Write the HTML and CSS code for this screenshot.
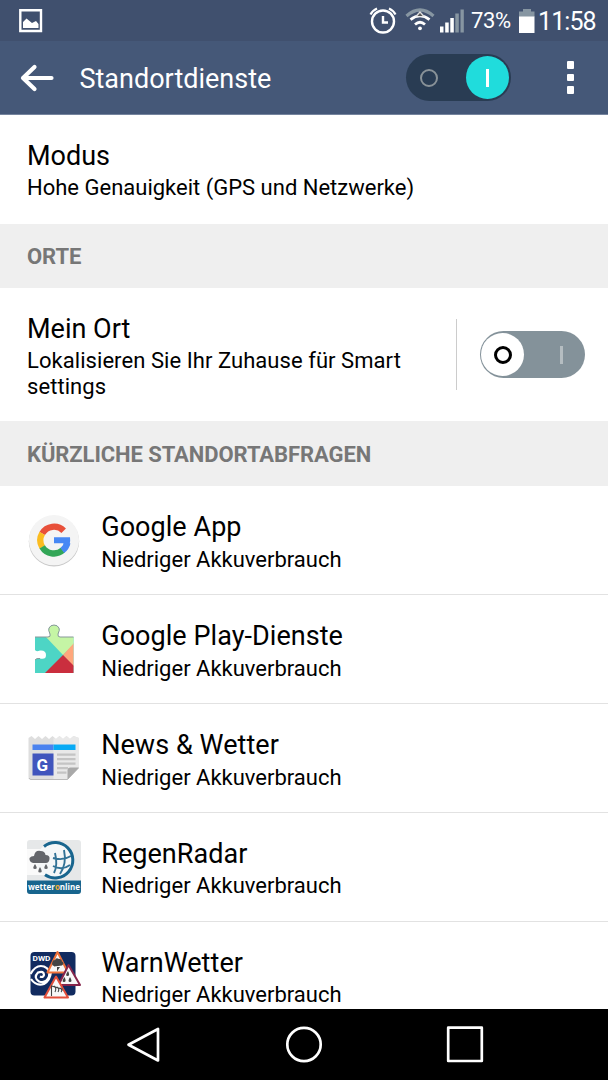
FILE: index.html
```html
<!DOCTYPE html>
<html lang="de">
<head>
<meta charset="utf-8">
<title>Standortdienste</title>
<link rel="stylesheet" href="styles.css">
</head>
<body>
<div class="screen">
  <div class="status">
    <svg class="picture" width="24" height="24" viewBox="0 0 24 24"><path d="M1.300 1.300H22V22H1.300Z" fill="none" stroke="#fff" stroke-width="2.400"/><path d="M4 19V13L7.500 9.500 13 14 17 12 19.500 15V19Z" fill="#fff"/></svg>
    <svg class="indicators" width="106" height="28" viewBox="0 0 106 28">
      <g fill="none" stroke="#fff" stroke-width="2.400"><circle cx="14" cy="15.500" r="11"/><path d="M14 10V16.500H19"/><path d="M1.500 8.500Q3.500 4.500 8 2.500M20 2.500Q24.500 4.500 26.500 8.500" stroke-width="2.200"/></g>
      <g fill="none" stroke="#fff" stroke-width="2.800"><path d="M37.500 10Q51 -2 64.500 10" stroke="#8796a2" stroke-width="3.200"/><path d="M41.500 13.700Q51 6 60.500 13.700"/><path d="M46 18.500Q51 14 56 18.500"/></g>
      <path d="M46 10.500L51 5 56 10.500Z" fill="#ddd"/><path d="M48.500 10L51 7 53.500 10Z" fill="#555"/><circle cx="51" cy="22.300" r="1.900" fill="#fff"/>
      <path d="M71 20.500H74.500V26.500H71ZM76.200 16.500H79.700V26.500H76.200ZM81.300 12H84.800V26.500H81.300Z" fill="#fff"/><path d="M86.300 7.500H89.800V26.500H86.300ZM91.500 3.500H94.800V26.500H91.500Z" fill="#8796a2"/>
    </svg>
    <span class="percent">73%</span>
    <svg class="battery" width="16" height="24" viewBox="0 0 16 24"><path d="M4 0H12V2.500H15.500V8H0V2.500H4Z" fill="#8796a2"/><path d="M0 7.500H15.500V24H0Z" fill="#fff"/></svg>
    <span class="clock">11:58</span>
  </div>
  <header class="bar">
    <svg class="back" width="34" height="28" viewBox="0 0 34 28" fill="none" stroke="#fff" stroke-width="4.200" stroke-linecap="round" stroke-linejoin="round"><path d="M14.500 3L3 14 14.500 25M3 14H31.500"/></svg>
    <h1 class="heading">Standortdienste</h1>
    <div class="switch on"><span class="off-mark"></span><span class="knob"><i class="line"></i></span></div>
    <div class="more"><i></i><i></i><i></i></div>
  </header>
  <main class="content">
    <section class="row"><div class="text"><div class="title">Modus</div><div class="sub">Hohe Genauigkeit (GPS und Netzwerke)</div></div></section>
    <h2 class="section">ORTE</h2>
    <section class="row place">
      <div class="text"><div class="title">Mein Ort</div><div class="sub wide">Lokalisieren Sie Ihr Zuhause für Smart settings</div></div>
      <div class="divider"></div>
      <div class="switch off"><span class="knob"><i class="ring"></i></span><i class="line"></i></div>
    </section>
    <h2 class="section recent">KÜRZLICHE STANDORTABFRAGEN</h2>
    <section class="row app">
      <svg class="icon" width="56" height="56" viewBox="0 0 56 56"><circle cx="28" cy="28.300" r="25.200" fill="#c8c8c8"/><circle cx="28" cy="27.200" r="25.100" fill="#f4f4f4"/>
        <g fill="none" stroke-width="6.300"><path d="M37.700 17.800A13.600 13.600 0 0 0 16.200 20.500" stroke="#e8503a"/><path d="M16.200 20.300A13.600 13.600 0 0 0 16.200 34.100" stroke="#fbbc20"/><path d="M16.200 33.800A13.600 13.600 0 0 0 36.800 37.200" stroke="#33a657"/><path d="M36.300 37.500A13.600 13.600 0 0 0 41.400 29.700" stroke="#4788f4"/></g><path d="M28 24.300H44Q44.700 28.500 43.400 32.500H37.500V30.300H28Z" fill="#4788f4"/></svg>
      <div class="text"><div class="title">Google App</div><div class="sub">Niedriger Akkuverbrauch</div></div>
    </section>
    <section class="row app">
      <svg class="icon" width="56" height="56" viewBox="0 0 56 56">
        <defs><clipPath id="puzzle"><path d="M9 15H22Q25 15 24 12Q22 8 23 6Q24.500 3 28 3T33 6Q34 8 32 12Q31.500 15 34 15H47.500V51H9V38Q10 36 14 36.500Q20 38 20 33T14 28.500Q10 30 9 28Z"/></clipPath></defs>
        <g clip-path="url(#puzzle)"><path d="M9 3H48V53H9Z" fill="#4dd5c5"/><path d="M19 14V0H48V22L37 33Z" fill="#c5f5a5"/><path d="M48 21V45L37 33Z" fill="#ffa77c"/><path d="M18 52L37 33 48 44V53Z" fill="#ca2e3e"/></g>
        <path d="M9 15H22Q25 15 24 12Q22 8 23 6Q24.500 3 28 3T33 6Q34 8 32 12Q31.500 15 34 15H47.500M9 38Q10 36 14 36.500" fill="none" stroke="#89999a"/></svg>
      <div class="text"><div class="title">Google Play-Dienste</div><div class="sub">Niedriger Akkuverbrauch</div></div>
    </section>
    <section class="row app">
      <svg class="icon" width="56" height="56" viewBox="0 0 56 56"><path d="M2.500 7L5.500 5 9 8 12.500 5 16 8 19.500 5 23 8 26.500 5 30 8 33.500 5 37 8 40.500 5 44 8 47.500 5 53 7V36L41.500 48.500H5Q2.500 48.500 2.500 46Z" fill="#dedede"/><path d="M27.500 7L30 8 33.500 5 37 8 40.500 5 44 8 47.500 5 53 7V36L41.500 48.500H27.500Z" fill="#e9e9e9"/><path d="M3 47Q3.500 48.500 5 48.500H41.500L52.500 37" fill="none" stroke="#bbb"/><path d="M41.500 48.500V39.500Q41.500 36.500 44.500 36.500H53Z" fill="#a9a9a9"/><path d="M6.500 13.500H27.500V19H6.500Z" fill="#4b83ef"/><path d="M27.500 13.500H49.500V19H27.500Z" fill="#08aaf5"/><path d="M6.500 22.500H27.500V44.500H6.500Z" fill="#4055bd"/><path d="M31 22.500H49.500V24.800H31ZM31 27H49.500V29.300H31ZM31 31.500H49.500V33.800H31ZM31 36H42V38.300H31ZM31 40.500H40.500V42.800H31Z" fill="#c4c4c4"/><text class="news-g" x="10.500" y="39.800">G</text></svg>
      <div class="text"><div class="title">News &amp; Wetter</div><div class="sub">Niedriger Akkuverbrauch</div></div>
    </section>
    <section class="row app">
      <svg class="icon" width="56" height="56" viewBox="0 0 56 56"><rect x="1" y="0" width="54" height="54" rx="3" fill="#e6e8e9"/><path d="M1 9H29V35H1Z" fill="#fafafa"/><circle cx="28" cy="20" r="17.500" fill="#f5f7f8"/><path d="M18 6.500A17.700 17.700 0 1 1 19 34.800" fill="none" stroke="#18658e" stroke-width="3"/><g fill="none" stroke="#327296" stroke-width="1.900"><path d="M27 18Q37 21 45 16M27 26Q36 31 44 25M29 13Q32 25 28 33M38 10Q41 24 34 34"/></g><path d="M7 23Q3 22 3.500 18Q5 16 8 16Q9 10 14.500 11Q19 11 19.500 15Q24 15 23.500 19T20 23Z" fill="#64666b"/><path d="M9 24Q5.500 29 9 29T9 24M14 27Q10.500 32.500 14 32.500T14 27M20 24Q16.500 29 20 29T20 24" fill="#65676b"/><path d="M1 40.500H55V51Q55 54 52 54H4Q1 54 1 51Z" fill="#18658e"/><text class="online" x="2" y="50" textLength="52" lengthAdjust="spacingAndGlyphs">wetter<tspan fill="#f6ac32">o</tspan>nline</text></svg>
      <div class="text"><div class="title">RegenRadar</div><div class="sub">Niedriger Akkuverbrauch</div></div>
    </section>
    <section class="row app">
      <svg class="icon" width="56" height="56" viewBox="0 0 56 56"><rect x="4.500" y="3" width="45" height="43.500" rx="4" fill="#112b60"/><path d="M4.500 25Q10 15 18 17.500Q25 20.500 23 27.500Q20 35 13 32.500Q7 28.500 12 23.500Q18 21.500 18 26Q17 29 14 27.500M5 30Q10 37.500 18 35Q24 32 25 23" fill="none" stroke="#fff" stroke-width="2.200"/><text class="dwd" x="6.500" y="11.500" textLength="18" lengthAdjust="spacingAndGlyphs">DWD</text>
        <g fill="#f8f8f8" stroke-width="2" stroke-linejoin="round"><path d="M31.500 3L21.500 23.500H42Z" stroke="#ef7138"/><path d="M42.500 16L32.500 36H54Z" stroke="#86254b"/><path d="M30 27.500L18.500 48.500H42Z" stroke="#e24f3b"/></g><path d="M28 17Q25 16 26.500 13Q26.500 11 29 11Q30 8 33 10Q36 9.500 36 12.500Q39 14 36 16.500L28 17.500ZM31 18H34L31 22.500ZM42 22Q38.500 27 41.500 27T42 22M38.500 28Q35 33 38 33T38.500 28M44 28Q41 33 44 33T44 28" fill="#444"/><path d="M25.500 47V37L36 40V42M28 37Q31 39 29 43M31 38Q34 40 32 43M34 39Q37 41 35 43" fill="none" stroke="#444" stroke-width="1.100"/></svg>
      <div class="text"><div class="title">WarnWetter</div><div class="sub">Niedriger Akkuverbrauch</div></div>
    </section>
  </main>
  <nav class="nav">
    <svg width="38" height="38" viewBox="0 0 38 38"><path d="M34 3V34.500L4.500 18.700Z"/></svg>
    <svg width="38" height="38" viewBox="0 0 38 38"><circle cx="19" cy="18.500" r="16.700"/></svg>
    <svg width="38" height="38" viewBox="0 0 38 38"><path d="M2.200 1.700H35.800V35H2.200Z"/></svg>
  </nav>
</div>
</body>
</html>
```
FILE: styles.css
```css
* { box-sizing: border-box; }
body { margin: 0; background: #fff; font-family: Roboto, sans-serif; color: #000; }
svg { display: block; flex-shrink: 0; }
.screen { width: 608px; height: 1080px; display: flex; flex-direction: column; overflow: hidden; }
.status { height: 41px; flex-shrink: 0; background: #40506e; color: #fff; display: flex; align-items: center; padding-left: 19px; }
.picture { margin-right: 326px; }
.indicators { margin-top: -2px; }
.percent { font-size: 22px; width: 44px; margin-left: -4px; letter-spacing: -.4px; white-space: nowrap; line-height: 43px; }
.battery { margin-left: 4px; }
.clock { font-size: 25px; margin-left: 3px; letter-spacing: -.9px; line-height: 44px; padding-top: 2px; }
.bar { height: 74px; flex-shrink: 0; background: #455878; border-bottom: 1px solid #75849e; color: #fff; display: flex; align-items: center; padding-left: 20px; }
.back { margin-right: 25.5px; }
.heading { margin: 3px 0 0; width: 326px; font-size: 27px; font-weight: 400; line-height: 32px; }
.switch { width: 105px; height: 47px; border-radius: 24px; display: flex; align-items: center; flex-shrink: 0; }
.on { background: #293c53; padding: 0 2px 0 14px; justify-content: space-between; }
.off-mark { width: 18px; height: 18px; border: 2.5px solid #899298; border-radius: 50%; }
.knob { width: 43px; height: 43px; border-radius: 50%; display: flex; align-items: center; justify-content: center; background: #20dcdc; }
.line { width: 3px; height: 18px; background: #fff; }
.more { display: flex; flex-direction: column; gap: 5px; margin-left: 56px; }
.more i { width: 7.5px; height: 7.5px; background: #fff; border-radius: 1px; }
.content { flex: 1; min-height: 0; overflow: hidden; }
.row { height: 109px; display: flex; padding: 23px 23px 0 27px; }
.title { font-size: 27px; line-height: 37px; white-space: nowrap; }
.sub { font-size: 22px; line-height: 26px; white-space: nowrap; }
.wide { width: 400px; white-space: normal; letter-spacing: .06px; }
.section { margin: 0; height: 64px; background: #efefef; color: #777; font-size: 22px; line-height: 65px; font-weight: 700; padding-left: 27px; letter-spacing: -.08px; }
.place { height: 133px; }
.place .text { width: 429px; }
.divider { width: 1px; height: 71px; margin-top: 8px; background: #ccc; }
.off { background: #84929a; margin: 20px 0 0 23px; padding: 0 22px 0 1px; justify-content: space-between; }
.off .knob { background: #fff; }
.off .line { background: #b5bdc1; }
.ring { width: 18px; height: 18px; border: 3px solid #000; border-radius: 50%; }
.recent { height: 65px; line-height: 67px; }
.app { height: 109px; border-bottom: 1px solid #e2e2e2; padding-top: 23px; padding-left: 26px; }
.app .title { letter-spacing: .05px; }
.app .sub { margin-top: 1px; }
.app:nth-last-child(-n+2) .sub { margin-top: 0; }
.icon { margin: 4px 19.2px 0 0; }
.news-g { font: 700 17px Roboto, sans-serif; fill: #fff; }
.online { font: 700 9px "Open Sans", sans-serif; fill: #fff; }
.dwd { font: 700 8px Roboto, sans-serif; fill: #fff; }
.nav { height: 71px; flex-shrink: 0; background: #000; display: flex; justify-content: space-between; align-items: center; padding: 0 124px; }
.nav svg { fill: none; stroke: #fff; stroke-width: 2.7px; stroke-linejoin: round; }
```
